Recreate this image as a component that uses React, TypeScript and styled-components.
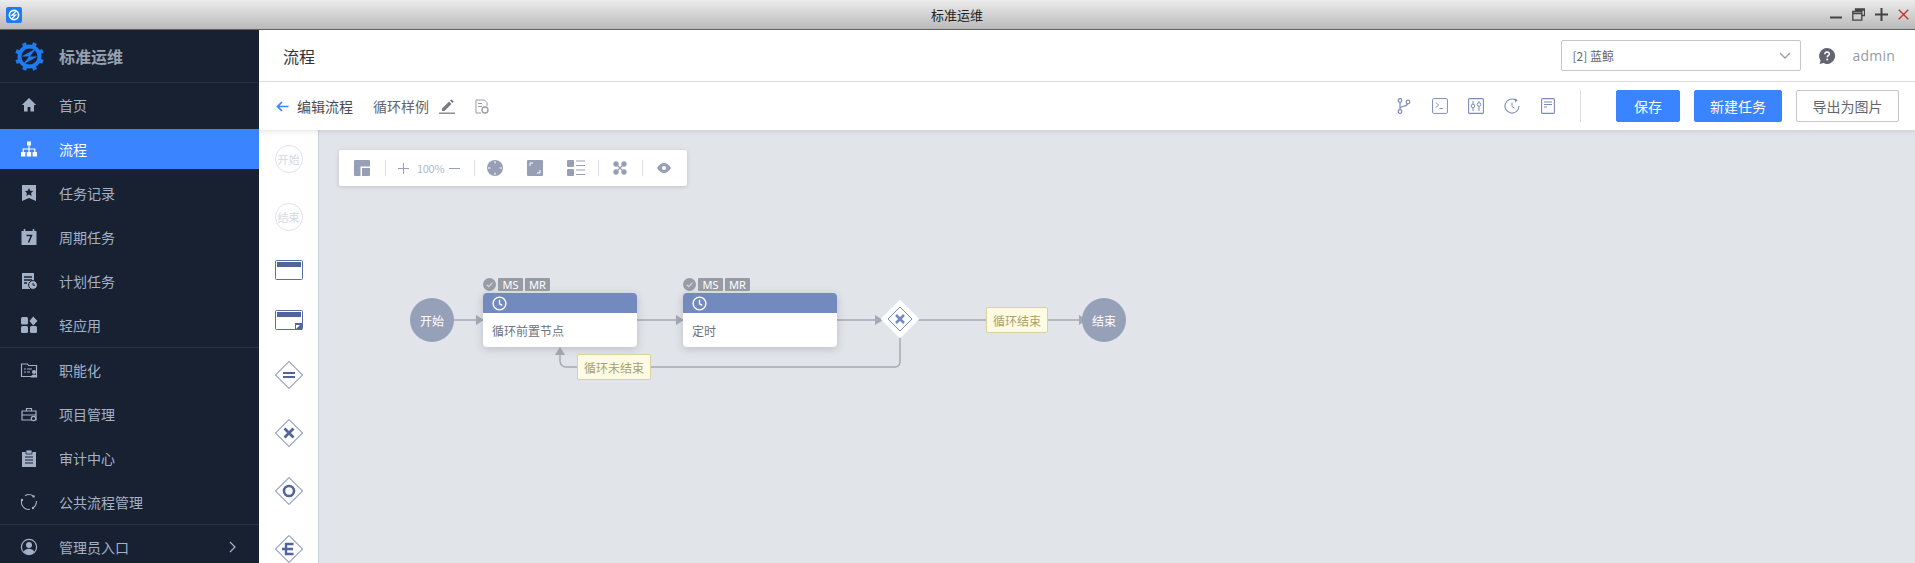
import React from 'react';
import styled, { createGlobalStyle } from 'styled-components';

const GlobalStyle = createGlobalStyle`
  html, body { margin: 0; padding: 0; height: 100%; overflow: hidden; }
  body { font-family: "Noto Sans CJK SC", "Noto Sans", sans-serif; font-size: 14px; }
  * { box-sizing: border-box; }
`;

const Page = styled.div`
  width: 1915px;
  height: 563px;
  display: flex;
  flex-direction: column;
  overflow: hidden;
  background: #fff;
`;

const TitleBar = styled.div`
  height: 30px;
  flex: none;
  display: flex;
  align-items: center;
  padding: 0 6px 0 6px;
  background: linear-gradient(#ececec, #b9b9b9);
  border-bottom: 1px solid #5f5f5f;
`;

const TitleText = styled.div`
  flex: 1;
  text-align: center;
  font-size: 13px;
  color: #222;
  padding-left: 62px;
`;

const WinControls = styled.div`
  display: flex;
  align-items: center;
  gap: 10px;
  height: 100%;
  padding-bottom: 1px;
`;

const Body = styled.div`
  flex: 1;
  display: flex;
  min-height: 0;
`;

const Sidebar = styled.aside`
  width: 259px;
  flex: none;
  background: #172132;
  display: flex;
  flex-direction: column;
`;

const Brand = styled.div`
  height: 53px;
  flex: none;
  display: flex;
  align-items: center;
  gap: 15px;
  padding-left: 15px;
  border-bottom: 1px solid #242e40;
  font-size: 16px;
  font-weight: 700;
  color: #98a1ae;
`;

const NavGroup = styled.div`
  display: flex;
  flex-direction: column;
  flex: none;
  gap: 4px;
  padding: 2px 0;
  border-bottom: 1px solid #293347;
  &:last-child { border-bottom: none; }
`;

const NavItem = styled.div<{ $active?: boolean }>`
  height: 40px;
  flex: none;
  display: flex;
  align-items: center;
  padding-left: 20px;
  gap: 21px;
  font-size: 14px;
  color: ${p => (p.$active ? '#fff' : '#a3b1c6')};
  background: ${p => (p.$active ? '#3a84ff' : 'transparent')};
  position: relative;
`;

const NavIconBox = styled.span`
  width: 18px;
  height: 18px;
  display: flex;
  align-items: center;
  justify-content: center;
`;

const Chevron = styled.svg`
  position: absolute;
  right: 22px;
`;

const Main = styled.main`
  flex: 1;
  min-width: 0;
  display: flex;
  flex-direction: column;
`;

const Header = styled.header`
  height: 52px;
  flex: none;
  display: flex;
  align-items: center;
  padding: 0 20px 0 24px;
  border-bottom: 1px solid #dcdee5;
`;

const PageTitle = styled.div`
  flex: 1;
  font-size: 16px;
  color: #313238;
`;

const BizSelect = styled.div`
  width: 240px;
  height: 31px;
  display: flex;
  align-items: center;
  justify-content: space-between;
  padding: 0 9px 0 11px;
  border: 1px solid #c4c6cc;
  border-radius: 2px;
  font-size: 12px;
  color: #63656e;
`;

const HelpIcon = styled.svg`
  margin-left: 18px;
`;

const UserName = styled.span`
  margin-left: 18px;
  font-size: 14px;
  color: #979ba5;
  font-family: "Open Sans", "Noto Sans", sans-serif;
  letter-spacing: 0.2px;
`;

const SubHeader = styled.div`
  height: 48px;
  flex: none;
  display: flex;
  align-items: center;
  padding: 0 16px 0 17px;
  position: relative;
  z-index: 2;
  background: #fff;
  box-shadow: 0 2px 4px rgba(120, 125, 140, 0.18);
`;

const BackText = styled.span`
  margin-left: 8px;
  color: #4a4c53;
  font-size: 14px;
`;

const FlowName = styled.span`
  margin-left: 20px;
  color: #63656e;
  font-size: 14px;
`;

const IconSlot = styled.span<{ $left: number }>`
  display: flex;
  flex: none;
  margin-left: ${p => p.$left}px;
`;

const Spacer = styled.div`
  flex: 1;
`;

const ToolDivider = styled.div`
  width: 1px;
  height: 32px;
  margin: 0 35px 0 25px;
  background: #dcdee5;
`;

const ActionButton = styled.button<{ $primary?: boolean; $w: number }>`
  height: 32px;
  padding: 0;
  width: ${p => p.$w}px;
  margin-right: 14px;
  font-family: inherit;
  font-size: 14px;
  border-radius: 2px;
  color: ${p => (p.$primary ? '#fff' : '#63656e')};
  background: ${p => (p.$primary ? '#3a84ff' : '#fff')};
  border: 1px solid ${p => (p.$primary ? '#3a84ff' : '#c4c6cc')};
  &:last-child { margin-right: 0; }
`;

const Workspace = styled.div`
  flex: 1;
  min-height: 0;
  display: flex;
`;

const Palette = styled.div`
  width: 60px;
  flex: none;
  background: #fff;
  border-right: 1px solid #c9cdda;
  display: flex;
  flex-direction: column;
  align-items: center;
  gap: 30px;
  padding-top: 15px;
  overflow: hidden;
`;

const PaletteCircle = styled.div`
  width: 28px;
  height: 28px;
  flex: none;
  border: 1px solid #dfe2ea;
  border-radius: 50%;
  display: flex;
  align-items: center;
  justify-content: center;
  font-size: 11px;
  color: #d5d8e2;
`;

const PaletteIcon = styled.svg`
  flex: none;
  display: block;
`;

const PaletteTask = styled.svg<{ $sub?: boolean }>`
  flex: none;
  display: block;
  margin-top: ${p => (p.$sub ? '0' : '-1px')};
  margin-bottom: ${p => (p.$sub ? '1px' : '0')};
`;

const Canvas = styled.div`
  flex: 1;
  min-width: 0;
  position: relative;
  background: #e1e4e8;
  overflow: hidden;
`;

const CanvasToolbar = styled.div`
  position: absolute;
  left: 20px;
  top: 20px;
  width: 348px;
  height: 36px;
  display: flex;
  align-items: center;
  padding-left: 15px;
  background: #fff;
  border-radius: 2px;
  box-shadow: 0 1px 4px rgba(100, 105, 120, 0.25);
`;

const ToolSep = styled.span<{ $left: number }>`
  width: 1px;
  height: 16px;
  flex: none;
  margin-left: ${p => p.$left}px;
  background: #dcdee5;
`;

const ZoomText = styled.span`
  margin-left: 8px;
  font-size: 11px;
  letter-spacing: -0.3px;
  color: #b4b9c6;
  width: 25px;
  flex: none;
`;

const Edges = styled.svg`
  position: absolute;
  left: 0;
  top: 0;
`;

const EventNode = styled.div<{ $x: number }>`
  position: absolute;
  left: ${p => p.$x}px;
  top: 168px;
  width: 44px;
  height: 44px;
  border-radius: 50%;
  background: #96a0b9;
  color: #fff;
  font-size: 12px;
  display: flex;
  align-items: center;
  justify-content: center;
`;

const TaskNode = styled.div<{ $x: number }>`
  position: absolute;
  left: ${p => p.$x}px;
  top: 163px;
  width: 154px;
  height: 54px;
  background: #fff;
  border-radius: 4px;
  box-shadow: 0 2px 8px rgba(90, 95, 110, 0.28);
`;

const TaskHead = styled.div`
  height: 20px;
  display: flex;
  align-items: center;
  padding-left: 9px;
  background: #738abe;
  border-radius: 4px 4px 0 0;
`;

const TaskName = styled.div`
  height: 34px;
  display: flex;
  align-items: center;
  padding: 0 9px;
  font-size: 12px;
  color: #70727a;
`;

const TaskBadges = styled.div`
  position: absolute;
  left: 0;
  top: -15px;
  height: 13px;
  display: flex;
  align-items: center;
  gap: 2px;
`;

const Badge = styled.span`
  width: 25px;
  height: 13px;
  background: #979ba5;
  color: #fff;
  font-size: 11px;
  line-height: 13px;
  text-align: center;
  border-radius: 1px;
  font-family: "Noto Sans", sans-serif;
`;

const GatewayNode = styled.svg`
  position: absolute;
  left: 561px;
  top: 169px;
`;

const BranchLabel = styled.div<{ $x: number; $y: number; $w: number }>`
  position: absolute;
  left: ${p => p.$x}px;
  top: ${p => p.$y}px;
  width: ${p => p.$w}px;
  height: 26px;
  display: flex;
  align-items: center;
  justify-content: center;
  font-size: 12px;
  color: #a8a26a;
  background: #fdfbe4;
  border: 1px solid #d8d29c;
  border-radius: 2px;
`;

const Sv = ({ children }: { children: React.ReactNode }) => (
  <svg width={18} height={18} viewBox="0 0 18 18" fill="none">{children}</svg>
);

const navColor = '#a3b1c6';
const navBg = '#172132';

const HomeIcon = () => (
  <Sv><path d="M9 2 1.8 9H4v6.5h3.6V11h2.8v4.5H14V9h2.2z" fill={navColor} /></Sv>
);
const TreeIcon = () => (
  <Sv>
    <path d="M7 1.5h4v4H7zM1 12h4.4v4.4H1zM6.8 12h4.4v4.4H6.8zM12.6 12H17v4.4h-4.4z" fill="#fff" />
    <path d="M9 5.5V12M3.2 12V9h11.6v3" stroke="#fff" strokeWidth="1.2" />
  </Sv>
);
const RecordIcon = () => (
  <Sv>
    <path d="M2 1h14v16l-7-3-7 3z" fill={navColor} />
    <path d="m9 4 1.3 2.7 2.9.3-2.1 2 .6 2.9L9 10.5l-2.7 1.4.6-2.9-2.1-2 2.9-.3z" fill={navBg} />
  </Sv>
);
const CalendarIcon = () => (
  <Sv>
    <path d="M1.5 3h15v14h-15z" fill={navColor} />
    <path d="M4.5 1v3.5M13.5 1v3.5" stroke={navColor} strokeWidth="1.6" />
    <path d="M6.5 7.5h5L8.5 14.5" stroke={navBg} strokeWidth="1.5" />
  </Sv>
);
const PlanIcon = () => (
  <Sv>
    <path d="M2 1h12v16H2z" fill={navColor} />
    <path d="M4 5h8M4 8h8M4 11h3" stroke={navBg} strokeWidth="1.3" />
    <circle cx="13" cy="13" r="4.4" fill={navColor} stroke={navBg} />
    <path d="M13 11v2.2h2" stroke={navBg} strokeWidth="1" />
  </Sv>
);
const AppIcon = () => (
  <Sv>
    <rect x="1" y="1" width="7" height="7.5" rx="1.5" fill={navColor} />
    <path d="M13.2.5 17.5 5l-4.3 4.5L9.5 5z" fill={navColor} />
    <rect x="1" y="10" width="7" height="7" rx="1.5" fill={navColor} />
    <rect x="10" y="10" width="7" height="7" rx="1.5" fill={navColor} />
  </Sv>
);
const FuncIcon = () => (
  <Sv>
    <path d="M1.5 3h6l1 1.500h8v11h-15z" stroke={navColor} strokeWidth="1.2" />
    <path d="M4 8h2M7 8h5M4 11h2M7 11h3" stroke={navColor} strokeWidth="1.2" />
    <circle cx="14" cy="11" r="2" fill={navColor} />
    <path d="M10.8 16.500c.3-2.200 1.600-3 3.200-3s2.900.8 3.200 3z" fill={navColor} />
  </Sv>
);
const ProjectIcon = () => (
  <Sv>
    <path d="M2 6h14v9H2zM6.5 6V3.5h5V6M2 10h14" stroke={navColor} strokeWidth="1.2" />
    <circle cx="13.5" cy="13.5" r="2.2" fill={navBg} stroke={navColor} strokeWidth="1.2" />
  </Sv>
);
const AuditIcon = () => (
  <Sv>
    <path d="M2 3h14v15H2z" fill={navColor} />
    <path d="M6 1h6v4H6z" fill={navColor} stroke={navBg} strokeWidth=".8" />
    <path d="M5 8h8M5 11h8M5 14h8" stroke={navBg} strokeWidth="1.1" />
  </Sv>
);
const CycleIcon = () => (
  <Sv>
    <path d="M5 2.8A7.4 7.4 0 0 1 13.2 3M16.4 8a7.4 7.4 0 0 1-3 6.6M9.8 16.4a7.4 7.4 0 0 1-7.4-3.6 7.4 7.4 0 0 1-.6-6" stroke={navColor} strokeWidth="1.1" />
    <circle cx="13.6" cy="3.4" r="1.2" fill={navColor} />
    <circle cx="13" cy="15" r="1.2" fill={navColor} />
    <circle cx="2" cy="7" r="1.2" fill={navColor} />
  </Sv>
);
const UserIcon = () => (
  <Sv>
    <circle cx="9" cy="9" r="7.6" stroke={navColor} strokeWidth="1.2" />
    <circle cx="9" cy="7" r="3" fill={navColor} />
    <path d="M3.6 14c1-2.400 3-3.300 5.400-3.300s4.400.9 5.400 3.300A7.500 7.500 0 0 1 9 16.400 7.500 7.500 0 0 1 3.600 14z" fill={navColor} />
  </Sv>
);

const logoBlue = '#1f7cf0';
const Logo = () => (
  <svg width="29" height="29" viewBox="0 0 29 29" fill="none">
    <circle cx="14.5" cy="14.5" r="10" stroke={logoBlue} strokeWidth="4" />
    {[0, 45, 90, 135, 180, 225, 270, 315].map(a => (
      <rect key={a} x="12.5" y="0" width="4" height="4" fill={logoBlue} transform={`rotate(${a + 22} 14.5 14.5)`} />
    ))}
    <path d="M21 6.5 6.5 14.5H14L8 22.500 22.500 14.500H15z" fill={logoBlue} />
  </svg>
);

const navGroups = [
  [
    { label: '首页', icon: <HomeIcon /> },
    { label: '流程', icon: <TreeIcon />, active: true },
    { label: '任务记录', icon: <RecordIcon /> },
    { label: '周期任务', icon: <CalendarIcon /> },
    { label: '计划任务', icon: <PlanIcon /> },
    { label: '轻应用', icon: <AppIcon /> },
  ],
  [
    { label: '职能化', icon: <FuncIcon /> },
    { label: '项目管理', icon: <ProjectIcon /> },
    { label: '审计中心', icon: <AuditIcon /> },
    { label: '公共流程管理', icon: <CycleIcon /> },
  ],
  [{ label: '管理员入口', icon: <UserIcon />, more: true }],
];

const ink = '#7b8cb8';
const toolInk = '#979fb6';
const paletteInk = '#52659b';

const Gateway = ({ mark }: { mark: React.ReactNode }) => (
  <PaletteIcon width="28" height="28" viewBox="1 1 28 28" fill="none">
    <path d="M15 1.5 28.5 15 15 28.5 1.5 15z" stroke="#5a6ea6" strokeWidth="1" strokeLinejoin="round" />
    {mark}
  </PaletteIcon>
);

const TaskGlyph = ({ sub }: { sub?: boolean }) => (
  <PaletteTask $sub={sub} width="28" height="20" viewBox="0 0 28 20" fill="none">
    <rect x=".5" y=".5" width="27" height="19" rx="1" stroke="#5a6ea6" />
    <rect x="2" y="2" width="24" height="5" fill={paletteInk} />
    {sub && (
      <>
        <rect x="20" y="13" width="7" height="7" fill={paletteInk} />
        <path d="m21 19 4-4h-4z" fill="#fff" />
      </>
    )}
  </PaletteTask>
);

const Clock = () => (
  <svg width={15} height={15} viewBox="0 0 15 15" fill="none">
    <circle cx="7.5" cy="7.5" r="6.4" stroke="#fff" strokeWidth="1.4" />
    <path d="M7.5 3.8v4l2.8 1.6" stroke="#fff" strokeWidth="1.3" />
  </svg>
);

const CheckDot = () => (
  <svg width="13" height="13" viewBox="0 0 13 13">
    <circle cx="6.5" cy="6.5" r="6.5" fill="#979ba5" />
    <path d="m3.5 6.6 2.2 2.1 3.8-4" stroke="#d7d9de" strokeWidth="1.1" fill="none" />
  </svg>
);

const Task = ({ x, name }: { x: number; name: string }) => (
  <TaskNode $x={x}>
    <TaskBadges>
      <CheckDot />
      <Badge>MS</Badge>
      <Badge>MR</Badge>
    </TaskBadges>
    <TaskHead><Clock /></TaskHead>
    <TaskName>{name}</TaskName>
  </TaskNode>
);

const edge = '#a6a9b3';

const App: React.FC = () => (
  <Page>
    <GlobalStyle />
    <TitleBar>
      <svg width="16" height="16" viewBox="0 0 16 16">
        <rect width="16" height="16" rx="2" fill={logoBlue} />
        <circle cx="8" cy="8" r="4.6" fill="none" stroke="#fff" strokeWidth="1.6" />
        <path d="M10 4.5 6 8.2h3.6L6 11.5" stroke="#fff" strokeWidth="1.2" fill="none" />
      </svg>
      <TitleText>标准运维</TitleText>
      <WinControls>
        <svg width="12" height="12" viewBox="0 0 12 12"><path d="M0 9.5h12" stroke="#444" strokeWidth="2" /></svg>
        <svg width="13" height="13" viewBox="0 0 13 13" fill="none"><path d="M3.5 2.5V.8h9v6.7H10M.8 3.5h9v8.7h-9zM.8 5.5h9M3.5 2.2h9" stroke="#444" strokeWidth="1.3" /></svg>
        <svg width="13" height="13" viewBox="0 0 13 13"><path d="M0 6.5h13M6.5 0v13" stroke="#444" strokeWidth="2" /></svg>
        <svg width="11" height="11" viewBox="0 0 12 12"><path d="m.8.8 10.4 10.4M11.2.8.8 11.2" stroke="#c9302c" strokeWidth="1.5" /></svg>
      </WinControls>
    </TitleBar>
    <Body>
      <Sidebar>
        <Brand><Logo />标准运维</Brand>
        {navGroups.map((group, i) => (
          <NavGroup key={i}>
            {group.map(item => (
              <NavItem key={item.label} $active={'active' in item && item.active}>
                <NavIconBox>{item.icon}</NavIconBox>
                {item.label}
                {'more' in item && (
                  <Chevron width="8" height="12" viewBox="0 0 8 12" fill="none">
                    <path d="m1 1 5 5-5 5" stroke={navColor} strokeWidth="1.3" />
                  </Chevron>
                )}
              </NavItem>
            ))}
          </NavGroup>
        ))}
      </Sidebar>
      <Main>
        <Header>
          <PageTitle>流程</PageTitle>
          <BizSelect>
            <span>[2] 蓝鲸</span>
            <svg width="12" height="8" viewBox="0 0 12 8" fill="none"><path d="m1 1 5 5 5-5" stroke="#979ba5" strokeWidth="1.3" /></svg>
          </BizSelect>
          <HelpIcon width="16" height="16" viewBox="0 0 16 16">
            <path d="M8 0a8 8 0 1 1-3.6 15.1L.6 16l1-3.4A8 8 0 0 1 8 0z" fill="#63656e" />
            <path d="M5.8 6.2C5.900 4.800 6.800 4 8.100 4c1.300 0 2.200.8 2.200 1.900 0 1.700-2.100 1.700-2.100 3.300" stroke="#fff" strokeWidth="1.4" fill="none" />
            <circle cx="8.2" cy="11.5" r="1" fill="#fff" />
          </HelpIcon>
          <UserName>admin</UserName>
        </Header>
        <SubHeader>
          <svg width="13" height="11" viewBox="0 0 13 11" fill="none"><path d="M12.5 5.5H1.5M6 1 1.5 5.5 6 10" stroke="#3a84ff" strokeWidth="1.7" /></svg>
          <BackText>编辑流程</BackText>
          <FlowName>循环样例</FlowName>
          <IconSlot $left={10}>
            <svg width="16" height="16" viewBox="0 0 16 16">
              <path d="m3 10.5 7-7 2.5 2.5-7 7H3zM11 2.500 12.300 1.200l2.500 2.500-1.300 1.300z" fill="#7a7c84" />
              <path d="M0 15.2h16" stroke="#7a7c84" strokeWidth="1.3" />
            </svg>
          </IconSlot>
          <IconSlot $left={20}>
            <svg width="14" height="15" viewBox="0 0 14 15" fill="none">
              <path d="M6 14H1V1h8.5L12 3.5V7M3 4.5h4M3 7.5h4" stroke="#979ba5" strokeWidth="1" />
              <circle cx="10" cy="11" r="3" stroke="#979ba5" strokeWidth="1.3" />
            </svg>
          </IconSlot>
          <Spacer />
          <svg width="14" height="16" viewBox="0 0 14 16" fill="none">
            <circle cx="3" cy="2.5" r="1.8" stroke={ink} strokeWidth="1.2" />
            <circle cx="3" cy="13.5" r="1.8" stroke={ink} strokeWidth="1.2" />
            <circle cx="11" cy="4" r="1.8" stroke={ink} strokeWidth="1.2" />
            <path d="M3 4.5v7M3 10.500c0-3 7-1.500 7.500-4.700" stroke={ink} strokeWidth="1.2" />
          </svg>
          <IconSlot $left={21}>
            <svg width="16" height="16" viewBox="0 0 16 16" fill="none">
              <rect x=".6" y=".6" width="14.8" height="14.8" rx="1" stroke={ink} />
              <path d="m4 4.5 2.5 2.5L4 9.5M7.5 10.5H11" stroke={ink} />
            </svg>
          </IconSlot>
          <IconSlot $left={20}>
            <svg width="16" height="16" viewBox="0 0 16 16" fill="none">
              <rect x=".6" y=".6" width="14.8" height="14.8" rx="1" stroke={ink} strokeWidth="1.1" />
              <path d="M5 3v3M5 10v3M11 3v1.5M11 8.500V13" stroke={ink} />
              <circle cx="5" cy="8" r="1.8" stroke={ink} />
              <circle cx="11" cy="6.5" r="1.8" stroke={ink} />
            </svg>
          </IconSlot>
          <IconSlot $left={20}>
            <svg width="16" height="16" viewBox="0 0 16 16" fill="none">
              <path d="M11.5 2A7 7 0 1 0 15 8" stroke={ink} strokeWidth="1.1" />
              <path d="M8 4.5V8.5L10.5 10" stroke={ink} />
              <path d="m10.5.2 3.3 1.800-2.500 2.500z" fill={ink} />
            </svg>
          </IconSlot>
          <IconSlot $left={21}>
            <svg width="14" height="16" viewBox="0 0 14 16" fill="none">
              <rect x=".6" y=".6" width="12.8" height="14.8" rx="1" stroke={ink} strokeWidth="1.1" />
              <path d="M3 4h8M3 6.5h8M3 9h3" stroke={ink} strokeWidth="1.1" />
            </svg>
          </IconSlot>
          <ToolDivider />
          <ActionButton $primary $w={64}>保存</ActionButton>
          <ActionButton $primary $w={88}>新建任务</ActionButton>
          <ActionButton $w={103}>导出为图片</ActionButton>
        </SubHeader>
        <Workspace>
          <Palette>
            <PaletteCircle>开始</PaletteCircle>
            <PaletteCircle>结束</PaletteCircle>
            <TaskGlyph />
            <TaskGlyph sub />
            <Gateway mark={<path d="M9 12h12v2H9zM9 16h12v2H9z" fill={paletteInk} />} />
            <Gateway mark={<path d="m10.5 10.5 9 9M19.5 10.5l-9 9" stroke={paletteInk} strokeWidth="2.8" />} />
            <Gateway mark={<circle cx="15" cy="15" r="5" stroke={paletteInk} strokeWidth="2.6" />} />
            <Gateway mark={<path d="M19.5 10H12v10h7.500M8 15h11" stroke={paletteInk} strokeWidth="2.4" />} />
          </Palette>
          <Canvas>
            <Edges width="1000" height="433" fill="none">
              <path d="M135 190h29M318 190h46M518 190h45M599 190h164M581 207v25a5 5 0 0 1-5 5H247a6 6 0 0 1-6-6v-12" stroke={edge} strokeWidth="1.5" />
              <path d="m157 185 8 5-8 5zM357 185l8 5-8 5zM556 185l8 5-8 5zM760 185l8 5-8 5zM241 217l-5 8h10z" fill={edge} />
            </Edges>
            <CanvasToolbar>
              <svg width="16" height="16" viewBox="0 0 16 16"><path d="M1 0h14a1 1 0 0 1 1 1v5.500H6.500V16H1a1 1 0 0 1-1-1V1a1 1 0 0 1 1-1zM8 8h8v7a1 1 0 0 1-1 1H8z" fill={toolInk} /></svg>
              <ToolSep $left={15} />
              <IconSlot $left={12}><svg width="11" height="11" viewBox="0 0 11 11"><path d="M0 5.5h11M5.5 0v11" stroke={toolInk} /></svg></IconSlot>
              <ZoomText>100%</ZoomText>
              <IconSlot $left={7}><svg width="11" height="11" viewBox="0 0 11 11"><path d="M0 5.5h11" stroke={toolInk} /></svg></IconSlot>
              <ToolSep $left={14} />
              <IconSlot $left={12}>
                <svg width="16" height="16" viewBox="0 0 16 16">
                  <circle cx="8" cy="8" r="8" fill={toolInk} />
                  <path d="M8 1v2.5M8 12.500V15M1 8h2.500M12.500 8H15" stroke="#fff" />
                </svg>
              </IconSlot>
              <IconSlot $left={24}>
                <svg width="16" height="16" viewBox="0 0 16 16" fill="none">
                  <rect width="16" height="16" rx="1" fill={toolInk} />
                  <path d="M3 6V3h3M13 10v3h-3" stroke="#fff" />
                </svg>
              </IconSlot>
              <IconSlot $left={24}>
                <svg width="18" height="16" viewBox="0 0 18 16">
                  <rect width="7" height="7" rx="1" fill={toolInk} />
                  <rect y="9" width="7" height="7" rx="1" fill={toolInk} />
                  <path d="M9 1h9M9 5.500h9M9 10h9M9 14.500h9" stroke={toolInk} strokeWidth="1.2" />
                </svg>
              </IconSlot>
              <ToolSep $left={13} />
              <IconSlot $left={14}>
                <svg width="14" height="14" viewBox="0 0 14 14">
                  <circle cx="3" cy="3" r="2.7" fill={toolInk} />
                  <circle cx="11" cy="3" r="2.7" fill={toolInk} />
                  <circle cx="3" cy="11" r="2.7" fill={toolInk} />
                  <circle cx="11" cy="11" r="2.7" fill={toolInk} />
                  <path d="m3 3 8 8M11 3l-8 8" stroke={toolInk} strokeWidth="1.2" />
                </svg>
              </IconSlot>
              <ToolSep $left={15} />
              <IconSlot $left={14}>
                <svg width="14" height="10" viewBox="0 0 14 10">
                  <path d="M0 5c2-3.300 4.500-5 7-5s5 1.700 7 5c-2 3.300-4.500 5-7 5S2 8.300 0 5z" fill={toolInk} />
                  <circle cx="7" cy="5" r="2" fill="#fff" />
                </svg>
              </IconSlot>
            </CanvasToolbar>
            <EventNode $x={91}>开始</EventNode>
            <Task x={164} name="循环前置节点" />
            <Task x={364} name="定时" />
            <GatewayNode width="40" height="40" viewBox="0 0 40 40" fill="none">
              <path d="M20 2 38 20 20 38 2 20z" fill="#fff" stroke="#fff" strokeWidth="2" strokeLinejoin="round" />
              <path d="M20 8 32 20 20 32 8 20z" stroke="#738abe" />
              <path d="m16 16 8 8M24 16l-8 8" stroke="#738abe" strokeWidth="2.5" />
            </GatewayNode>
            <BranchLabel $x={258} $y={224} $w={74}>循环未结束</BranchLabel>
            <BranchLabel $x={667} $y={177} $w={62}>循环结束</BranchLabel>
            <EventNode $x={763}>结束</EventNode>
          </Canvas>
        </Workspace>
      </Main>
    </Body>
  </Page>
);

export default App;
